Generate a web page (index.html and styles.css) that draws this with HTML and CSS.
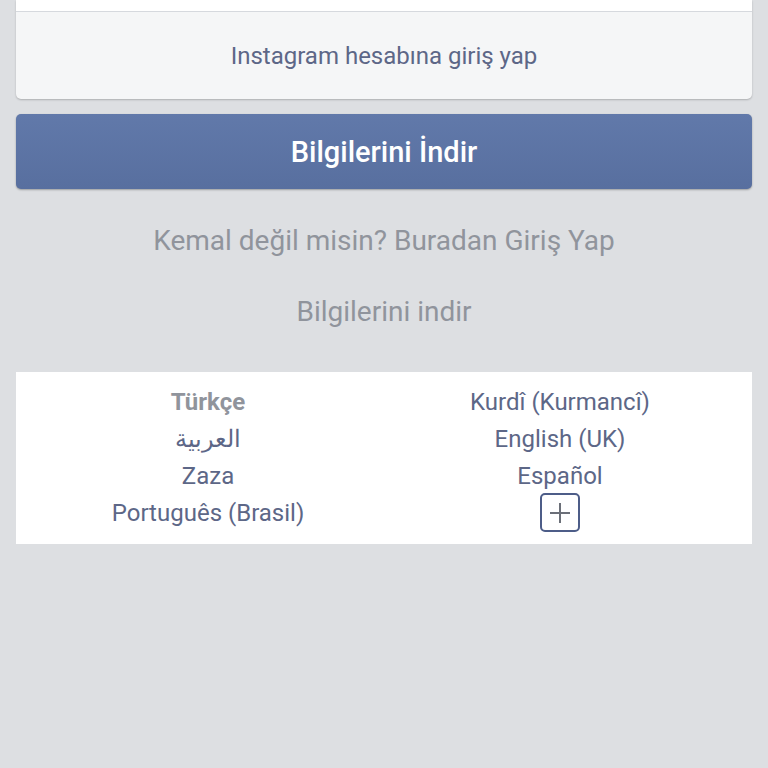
FILE: index.html
```html
<!DOCTYPE html>
<html lang="tr">
<head>
    <meta charset="UTF-8">
    <meta name="viewport" content="width=device-width, initial-scale=1.0">
    <title>Bilgilerini İndir</title>
    <link rel="stylesheet" href="styles.css">
</head>
<body>
    <div class="page">
        <div class="card">
            <div class="card-top"></div>
            <a class="card-link" href="#">Instagram hesabına giriş yap</a>
        </div>

        <button class="main-btn" type="button">Bilgilerini İndir</button>

        <a class="alt-link first" href="#">Kemal değil misin? Buradan Giriş Yap</a>
        <a class="alt-link" href="#">Bilgilerini indir</a>

        <div class="langs">
            <span class="lang current">Türkçe</span>
            <a class="lang" href="#">Kurdî (Kurmancî)</a>
            <a class="lang" href="#" dir="rtl">العربية</a>
            <a class="lang" href="#">English (UK)</a>
            <a class="lang" href="#">Zaza</a>
            <a class="lang" href="#">Español</a>
            <a class="lang" href="#">Português (Brasil)</a>
            <div class="lang">
                <a class="more-btn" href="#" aria-label="Daha fazla dil">
                    <svg width="22" height="22" viewBox="0 0 22 22">
                        <path d="M11 1v20M1 11h20" stroke="#6b6f78" stroke-width="2" fill="none"/>
                    </svg>
                </a>
            </div>
        </div>
    </div>
</body>
</html>
```

FILE: styles.css
```css
body {
    margin: 0;
    background-color: #dddfe2;
    font-family: Roboto, 'Noto Sans', sans-serif;
    height: 768px;
}

a {
    text-decoration: none;
}

.page {
    padding: 0 16px;
}

.card {
    background-color: #f5f6f7;
    border-radius: 0 0 5px 5px;
    box-shadow: 0 1px 2px rgba(0, 0, 0, 0.22);
}

.card-top {
    height: 11px;
    background-color: #fff;
    border-bottom: 1px solid #d6d9de;
}

.card-link {
    display: flex;
    justify-content: center;
    align-items: center;
    height: 87px;
    font-size: 24px;
    color: #5d6787;
}

.main-btn {
    display: block;
    width: 100%;
    height: 75px;
    margin-top: 15px;
    border: none;
    border-radius: 5px;
    background-image: linear-gradient(#6179aa, #586f9f);
    box-shadow: 0 1px 2px rgba(0, 0, 0, 0.3);
    color: #fff;
    font-family: Roboto, sans-serif;
    font-size: 29px;
    font-weight: 500;
}

.alt-link {
    display: block;
    margin-top: 31px;
    line-height: 40px;
    text-align: center;
    font-size: 28px;
    color: #90949c;
}

.alt-link.first {
    margin-top: 32px;
}

.langs {
    display: grid;
    grid-template-columns: 1fr 1fr;
    grid-auto-rows: 37px;
    align-items: center;
    margin-top: 40px;
    padding: 11px 16px 13px;
    background-color: #fff;
}

.lang {
    display: flex;
    justify-content: center;
    align-items: center;
    font-size: 24px;
    color: #5d6787;
}

.lang.current {
    font-weight: bold;
    color: #90949c;
}

.more-btn {
    display: flex;
    justify-content: center;
    align-items: center;
    width: 36px;
    height: 35px;
    border: 2px solid #4d5d88;
    border-radius: 5px;
}
```
